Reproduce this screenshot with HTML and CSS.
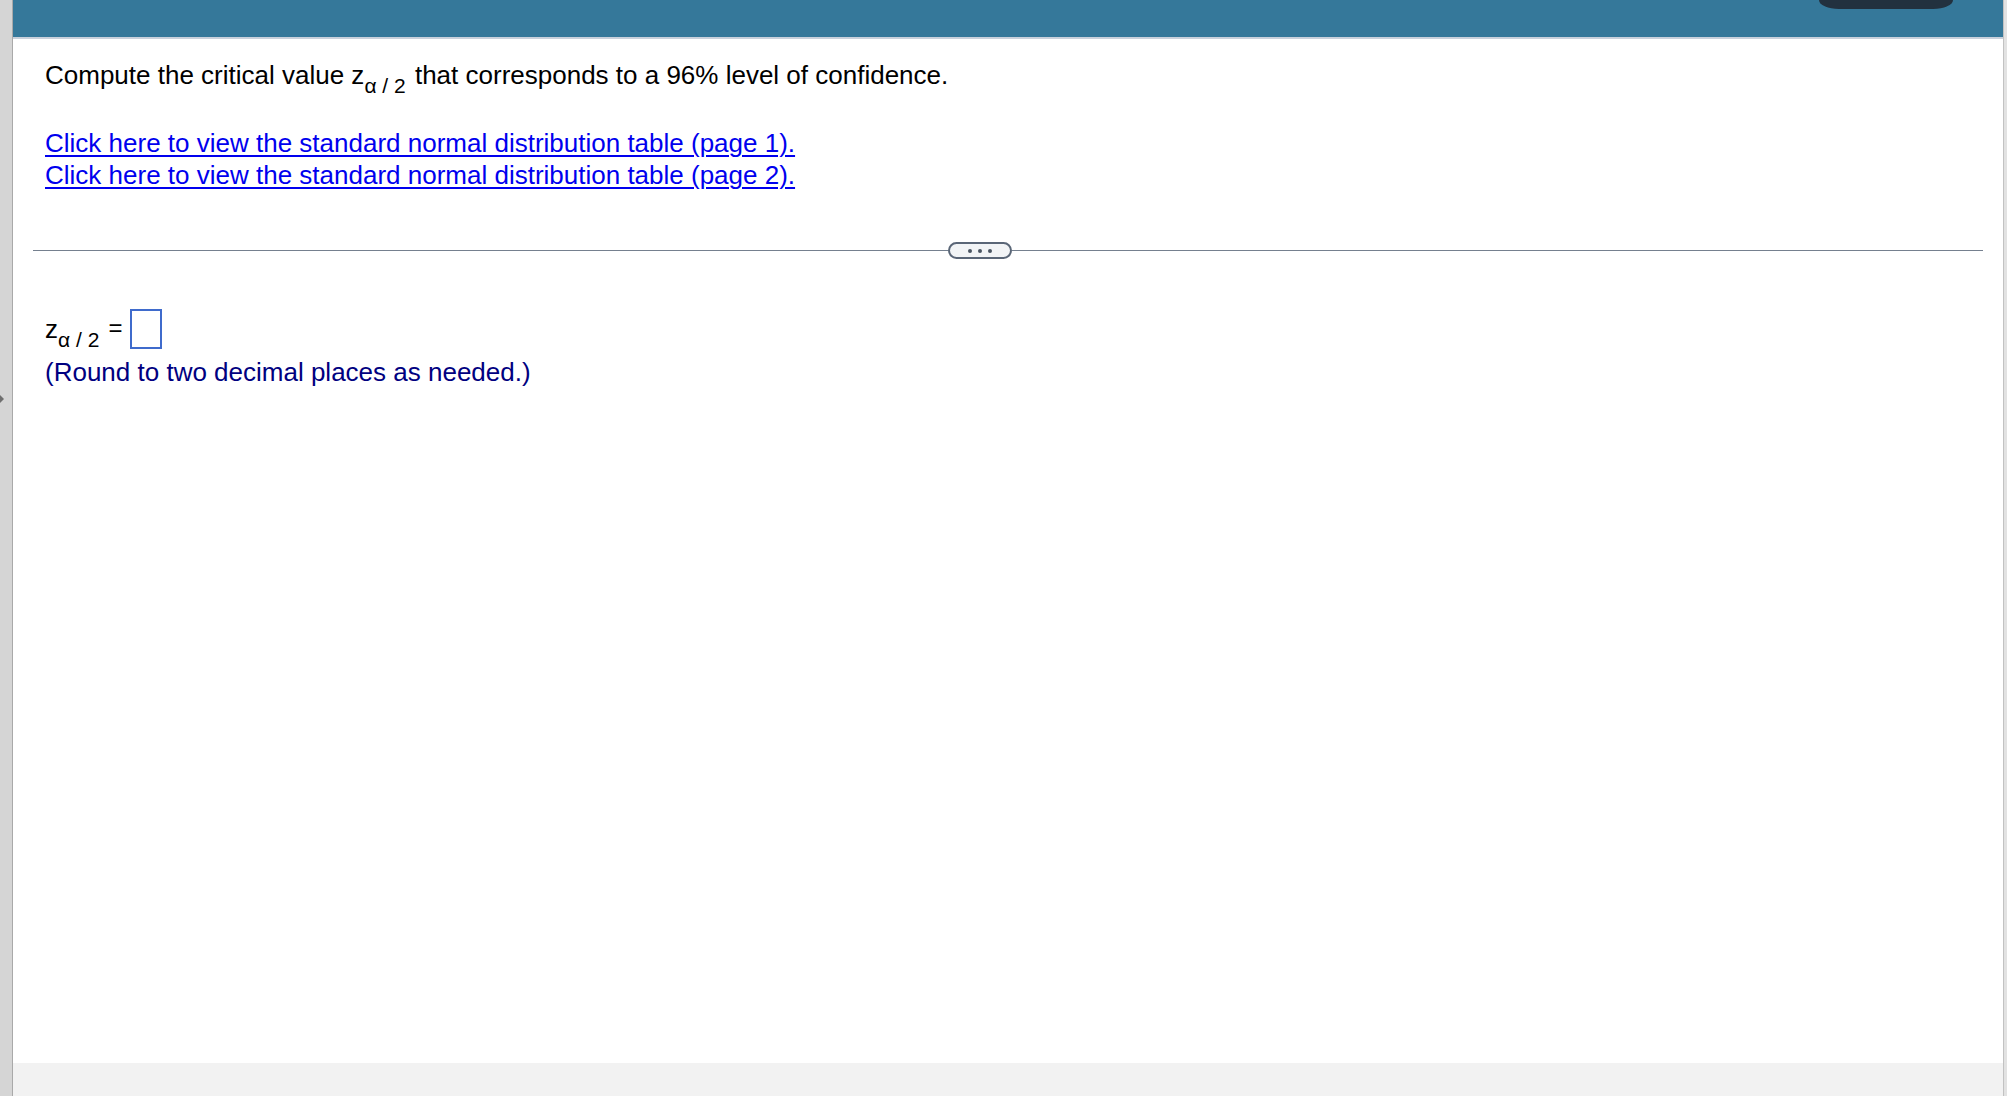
FILE: index.html
```html
<!DOCTYPE html>
<html lang="en">
<head>
<meta charset="utf-8">
<title>Critical value</title>
<link rel="stylesheet" href="styles.css">
</head>
<body>
<div class="frame">
  <div class="side-left"><span class="side-arrow"></span></div>
  <div class="main">
    <header class="topbar"><div class="topbar-tab"></div></header>
    <section class="content">
      <p class="question">Compute the critical value z<span class="sub">α / 2</span> that corresponds to a 96% level of confidence.</p>
      <div class="links">
        <a href="#" class="table-link">Click here to view the standard normal distribution table (page 1).</a>
        <a href="#" class="table-link">Click here to view the standard normal distribution table (page 2).</a>
      </div>
      <div class="divider">
        <span class="divider-line"></span>
        <span class="divider-pill"><i></i><i></i><i></i></span>
        <span class="divider-line"></span>
      </div>
      <div class="answer">z<span class="sub">α / 2</span> <span class="eq">=</span> <span class="answer-box"></span></div>
      <p class="hint">(Round to two decimal places as needed.)</p>
    </section>
    <footer class="bottombar"></footer>
  </div>
  <div class="side-right"></div>
</div>
</body>
</html>
```

FILE: styles.css
```css
html, body {
  margin: 0;
  padding: 0;
  height: 100%;
}
body {
  font-family: "Liberation Sans", Arial, sans-serif;
  background: #ffffff;
  overflow: hidden;
}
.frame {
  display: flex;
  height: 1096px;
}
.side-left {
  width: 12px;
  background: #d5d5d5;
  border-right: 1px solid #a9a9a9;
  display: flex;
  flex-direction: column;
}
.side-arrow {
  margin-top: 395px;
  width: 0;
  height: 0;
  border-top: 4px solid transparent;
  border-bottom: 4px solid transparent;
  border-left: 4px solid #6f6f6f;
}
.side-right {
  width: 3px;
  background: #e2e2e2;
  border-left: 1px solid #c2c2c2;
}
.main {
  flex: 1;
  display: flex;
  flex-direction: column;
}
.topbar {
  height: 37px;
  background: #35789a;
  border-bottom: 2px solid #c9d1dc;
  display: flex;
  justify-content: flex-end;
  padding-right: 50px;
}
.topbar-tab {
  width: 134px;
  height: 9px;
  background: #22313f;
  border-bottom-left-radius: 20px 9px;
  border-bottom-right-radius: 20px 9px;
}
.content {
  flex: 1;
  padding: 20px 20px 0 20px;
}
.question {
  margin: 0;
  padding-left: 12px;
  font-size: 26px;
  line-height: 32px;
  color: #000;
}
.sub {
  font-size: 21px;
  line-height: 0;
  vertical-align: -9px;
  margin-right: 2px;
}
.links {
  padding-left: 12px;
  margin-top: 36px;
  display: flex;
  flex-direction: column;
  align-items: flex-start;
}
.table-link {
  font-size: 26px;
  line-height: 32px;
  color: #0000ee;
  text-decoration: underline;
  text-underline-offset: 3px;
  text-decoration-thickness: 2px;
}
.divider {
  margin-top: 51px;
  height: 17px;
  display: flex;
  align-items: center;
}
.divider-line {
  flex: 1;
  height: 1px;
  background: #75808f;
}
.divider-line:first-child {
  flex: 0 0 915px;
}
.divider-pill {
  width: 60px;
  height: 13px;
  border: 2px solid #5a6677;
  border-radius: 9px;
  background: #f2f4f6;
  display: flex;
  justify-content: center;
  align-items: center;
  gap: 6px;
}
.divider-pill i {
  width: 4px;
  height: 4px;
  border-radius: 50%;
  background: #4b5563;
}
.answer {
  margin-top: 50px;
  padding-left: 12px;
  font-size: 26px;
  line-height: 32px;
  color: #000;
}
.eq {
  font-size: 24px;
  vertical-align: 2px;
}
.answer-box {
  display: inline-block;
  width: 28px;
  height: 36px;
  border: 2px solid #3f6bcc;
  vertical-align: -11px;
}
.hint {
  margin: 7px 0 0 0;
  padding-left: 12px;
  font-size: 26px;
  line-height: 32px;
  color: #000080;
}
.bottombar {
  height: 33px;
  background: #f2f2f2;
}
```
